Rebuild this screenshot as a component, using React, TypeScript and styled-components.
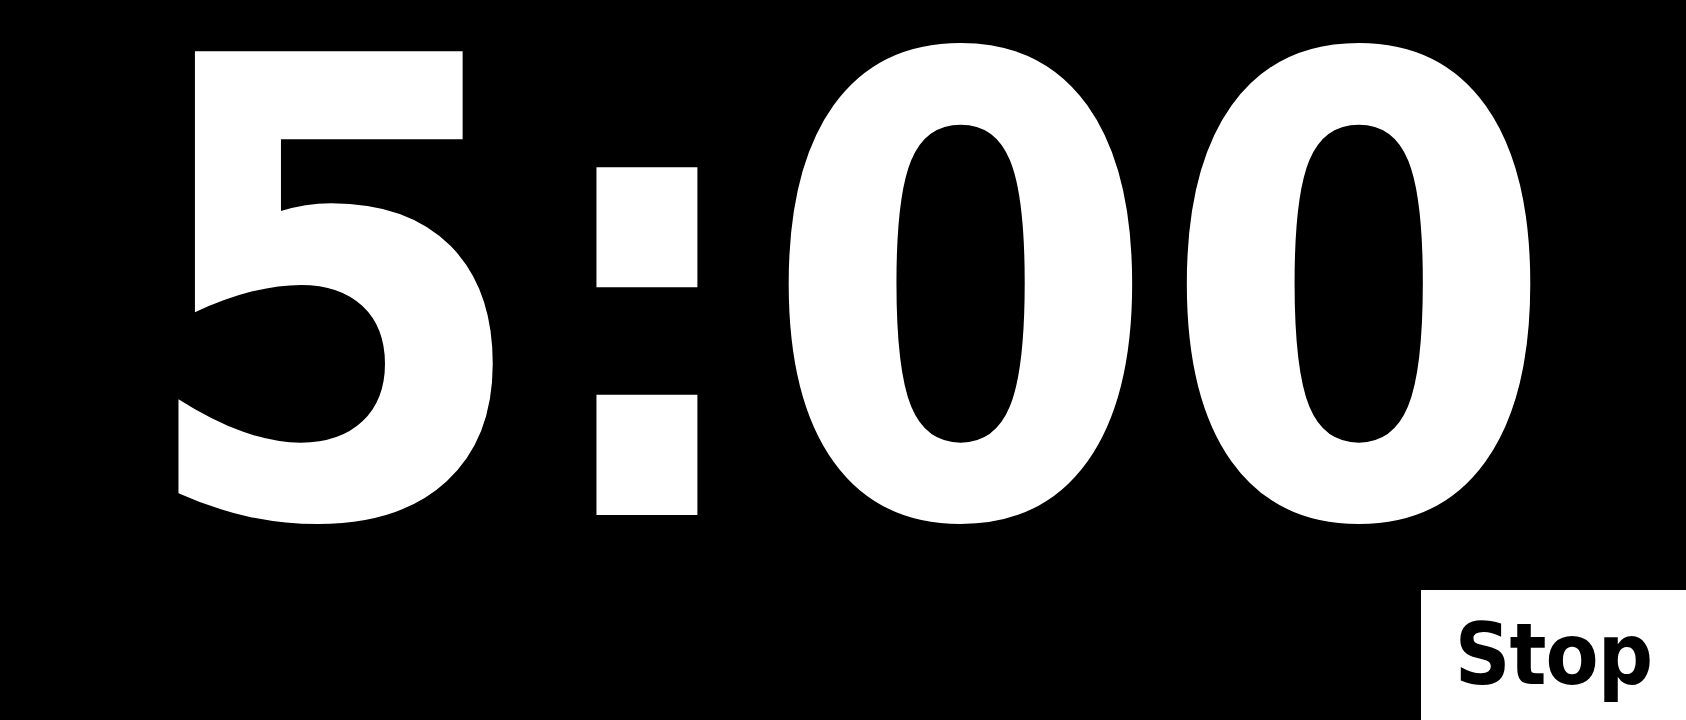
import React from "react";
import styled, { createGlobalStyle } from "styled-components";

const GlobalStyle = createGlobalStyle`
  html, body {
    margin: 0;
    padding: 0;
    background: #000;
  }
  body {
    font-family: "DejaVu Sans Condensed", "DejaVu Sans", Verdana, sans-serif;
  }
`;

const Page = styled.div`
  height: 100vh;
  width: 100vw;
  background: #000;
  display: flex;
  flex-direction: column;
  overflow: hidden;
`;

const Display = styled.div`
  flex: 1;
  padding-top: 41px;
  padding-left: 6px;
  text-align: center;
  color: #fff;
  font-family: "DejaVu Sans Condensed", "DejaVu Sans", sans-serif;
  font-weight: bold;
  font-size: 636px;
  line-height: 0.8;
  white-space: nowrap;
`;

const Footer = styled.div`
  display: flex;
  justify-content: flex-end;
`;

const StopButton = styled.button`
  width: 265px;
  height: 130px;
  border: none;
  margin: 0;
  padding: 0 0 2px 0;
  background: #fff;
  color: #000;
  font-family: "DejaVu Sans Condensed", "DejaVu Sans", sans-serif;
  font-weight: bold;
  font-size: 86px;
  letter-spacing: -1px;
  line-height: 1;
  cursor: pointer;
  display: flex;
  align-items: center;
  justify-content: center;
`;

export default function App() {
  return (
    <>
      <GlobalStyle />
      <Page>
        <Display>5:00</Display>
        <Footer>
          <StopButton>Stop</StopButton>
        </Footer>
      </Page>
    </>
  );
}
